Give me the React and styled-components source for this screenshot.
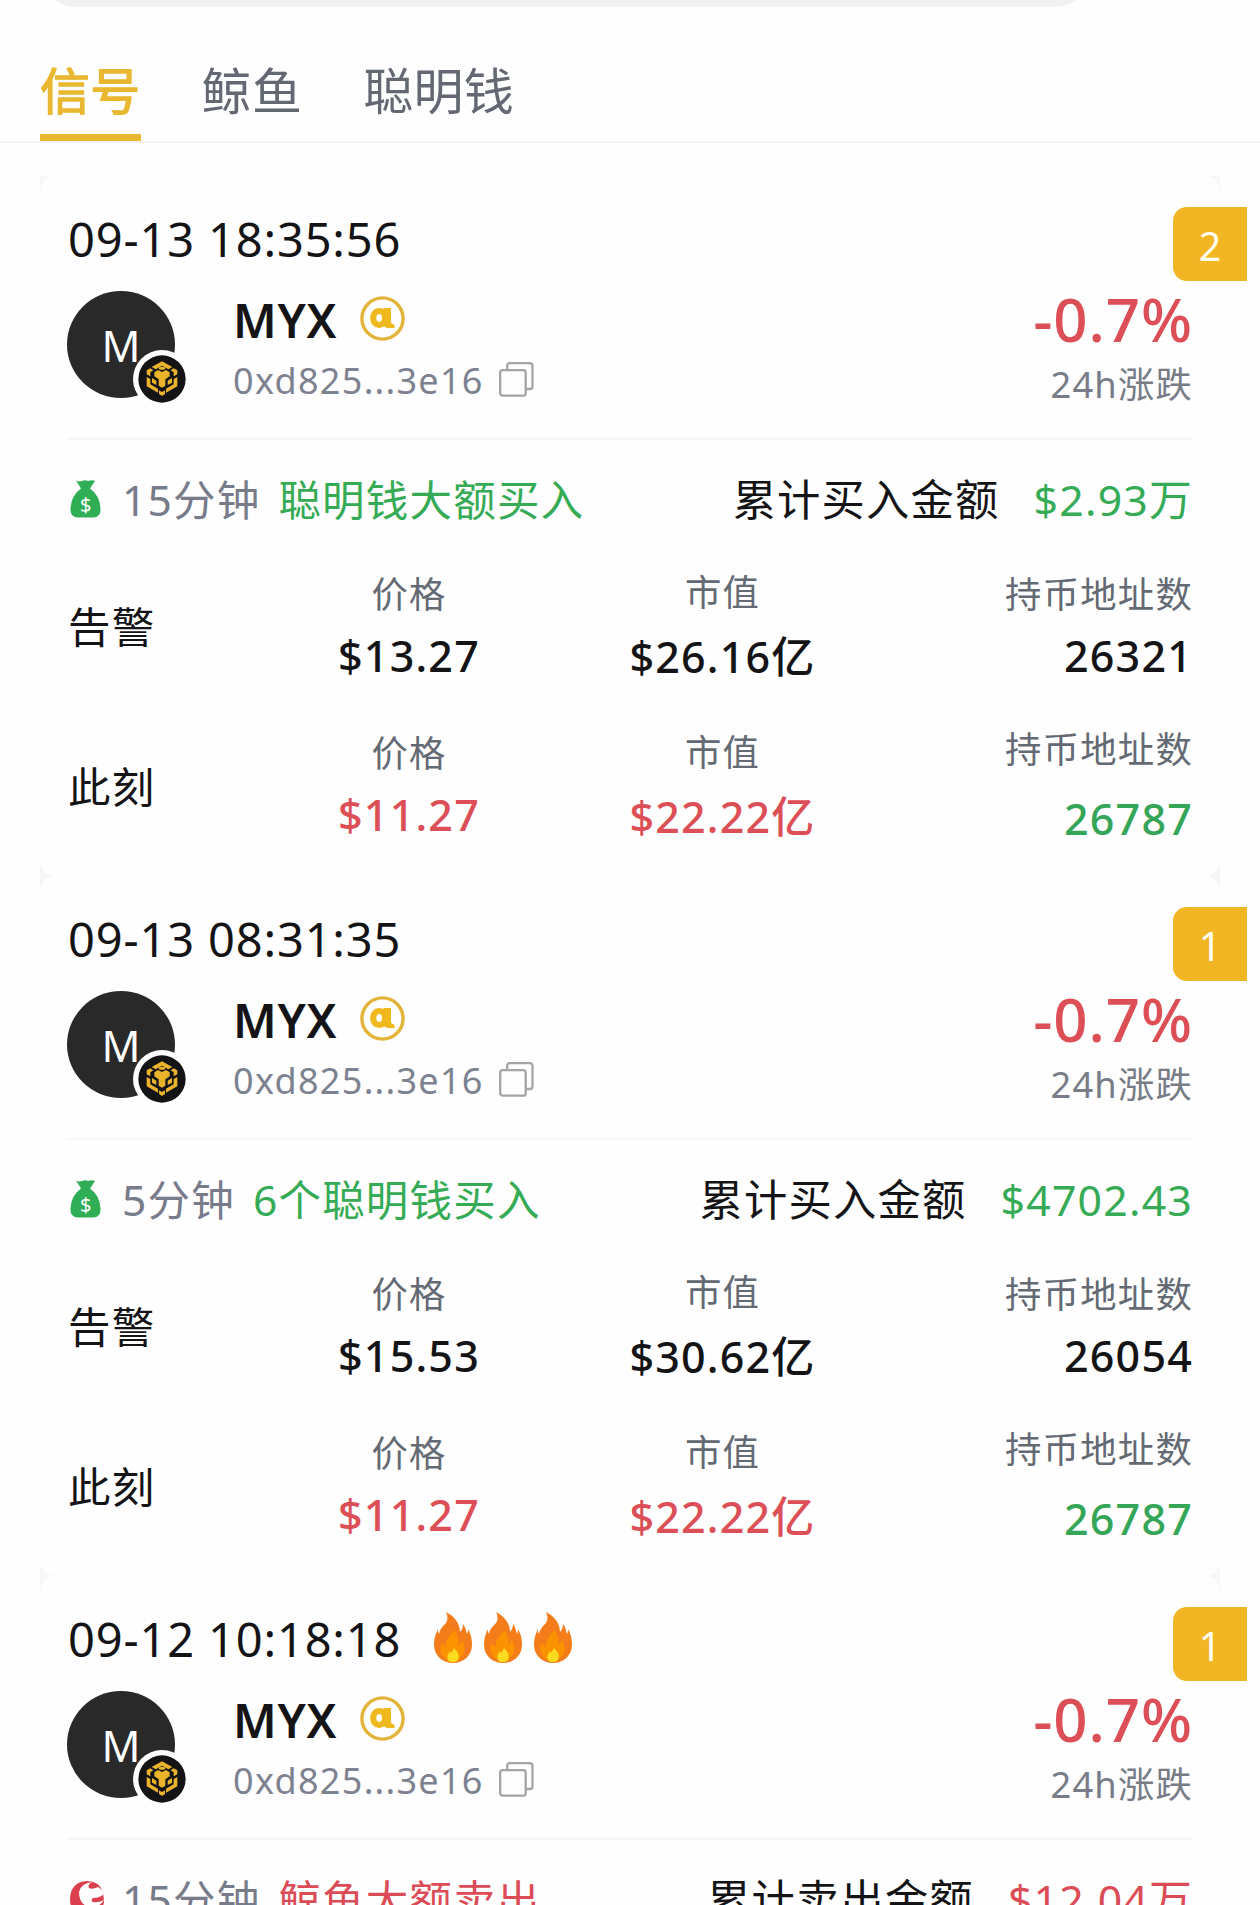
import React from 'react';
import styled, { createGlobalStyle } from 'styled-components';

const GlobalStyle = createGlobalStyle`
    body {
        margin: 0;
        background: #fefefe;
        color: #141416;
        font-family: "Noto Sans", "Noto Sans CJK SC", sans-serif;
        letter-spacing: 1.2px;
    }
`;

const Page = styled.div`
    width: 1260px;
    height: 1905px;
    overflow: hidden;
`;

const SearchClip = styled.div`
    display: flex;
    flex-direction: column;
    justify-content: flex-end;
    height: 7px;
    overflow: hidden;
`;

const SearchBar = styled.div`
    flex: none;
    width: 1045px;
    height: 80px;
    margin-left: 43px;
    border-radius: 32px;
    background: #f1f1f4;
`;

const Tabs = styled.div`
    display: flex;
    gap: 61px;
    height: 134px;
    padding-left: 40px;
    border-bottom: 2px solid #f4f4f5;
`;

const Tab = styled.div`
    box-sizing: border-box;
    padding-top: 54px;
    font-size: 50px;
    line-height: 61px;
    letter-spacing: 0.3px;
    color: ${p => (p.$active ? '#e9b730' : '#636872')};
    border-bottom: ${p => (p.$active ? '7px solid #e9b730' : 'none')};
    -webkit-text-stroke: ${p => (p.$active ? '1.3px #e9b730' : '0')};
`;

const List = styled.div`
    margin: 33px 40px 0;
    background: #f7f7f8;
`;

const Card = styled.div`
    position: relative;
    box-sizing: border-box;
    height: 700px;
    padding: 31px 28px 0;
    border-radius: 15px;
    background: #fefefe;
`;

const Rank = styled.div`
    position: absolute;
    top: 31px;
    right: -27px;
    width: 74px;
    height: 74px;
    border-radius: 14px 0 0 14px;
    background: #f2b624;
    color: #fffdf0;
    font-size: 39.5px;
    line-height: 78px;
    letter-spacing: 0;
    text-align: center;
`;

const DateRow = styled.div`
    display: flex;
    align-items: center;
    height: 60px;
    font-size: 47px;
    letter-spacing: 0.85px;
`;

const DateText = styled.span`
    padding-top: 3px;
    line-height: 60px;
`;

const Fires = styled.div`
    display: flex;
    gap: 12px;
    margin-left: 33px;
`;

const Header = styled.div`
    display: flex;
    align-items: flex-start;
    height: 117px;
    margin-top: 21px;
    padding-bottom: 33px;
    border-bottom: 2px solid #f7f7f8;
`;

const Avatar = styled.div`
    position: relative;
    width: 108px;
    height: 107px;
    margin: 3px 1px 0 -1px;
    border-radius: 50%;
    background: #292929;
    color: #fff;
    font-size: 43px;
    line-height: 109px;
    letter-spacing: 0;
    text-align: center;
`;

const ChainBadge = styled.svg`
    position: absolute;
    left: 66px;
    top: 59px;
    width: 58px;
    height: 58px;
`;

const Info = styled.div`
    flex: 1;
    padding: 7px 0 0 57px;
`;

const Name = styled.div`
    display: flex;
    align-items: center;
    gap: 23px;
    height: 50px;
    font-size: 47px;
    line-height: 50px;
    font-weight: 600;
    letter-spacing: 0.8px;

    svg {
        margin-bottom: 3px;
    }
`;

const Address = styled.div`
    display: flex;
    align-items: center;
    gap: 15px;
    height: 44px;
    margin-top: 14px;
    font-size: 36px;
    line-height: 44px;
    letter-spacing: 1.3px;
    color: #7d8290;

    svg {
        margin-bottom: 4px;
    }
`;

const Change = styled.div`
    text-align: right;
    font-size: 60px;
    line-height: 62px;
    font-weight: 500;
    letter-spacing: 0.9px;
    margin-right: -1px;
    color: #dd4f57;
`;

const ChangeLabel = styled.div`
    margin: 12px -1px 0 0;
    text-align: right;
    font-size: 36.3px;
    line-height: 44px;
    color: #777c86;
`;

const Signal = styled.div`
    display: flex;
    align-items: center;
    height: 60px;
    margin: 29px -1px 0 0;
    font-size: 42.5px;
    line-height: 60px;
    white-space: nowrap;

    span {
        padding-top: 2px;
    }
`;

const SignalIcon = styled.svg`
    flex: none;
    margin-left: 1px;
    width: 35px;
    height: 38px;
`;

const Period = styled.span`
    margin-left: 18px;
    color: #777b8a;
`;

const Action = styled.span`
    margin-left: 18px;
    color: ${p => (p.$sell ? '#dc4c57' : '#35ab55')};
`;

const Total = styled.span`
    margin-left: auto;
    font-size: 43.3px;
`;

const Amount = styled.span`
    margin-left: 34px;
    font-size: 42.8px;
    color: ${p => (p.$sell ? '#dc4c57' : '#35ab55')};
`;

const Stats = styled.div`
    display: grid;
    grid-template-columns: 180px 322px 305px 1fr;
    align-items: center;
    height: 111px;
    margin: ${p => (p.$first ? 41 : 46)}px -1px 0 0;
`;

const StatTitle = styled.div`
    padding-top: 2px;
    font-size: 42.5px;
    line-height: 60px;
`;

const Stat = styled.div`
    display: flex;
    flex-direction: column;
    align-items: ${p => (p.$end ? 'flex-end' : 'center')};
    gap: ${p => p.$gap || 15}px;
`;

const StatLabel = styled.div`
    font-size: 36.4px;
    line-height: 44px;
    color: #646a73;
`;

const StatValue = styled.div`
    font-size: 43px;
    line-height: 50px;
    font-weight: 500;
    color: ${p => p.$color || '#141416'};
`;

const RED = '#dc4f56';
const GREEN = '#35a557';

const cards = [
    {
        date: '09-13 18:35:56',
        rank: 2,
        fires: 0,
        period: '15分钟',
        action: '聪明钱大额买入',
        total: '累计买入金额',
        amount: '$2.93万',
        alert: ['$13.27', '$26.16亿', '26321'],
        now: ['$11.27', '$22.22亿', '26787'],
    },
    {
        date: '09-13 08:31:35',
        rank: 1,
        fires: 0,
        period: '5分钟',
        action: '6个聪明钱买入',
        total: '累计买入金额',
        amount: '$4702.43',
        alert: ['$15.53', '$30.62亿', '26054'],
        now: ['$11.27', '$22.22亿', '26787'],
    },
    {
        date: '09-12 10:18:18',
        rank: 1,
        fires: 3,
        sell: true,
        period: '15分钟',
        action: '鲸鱼大额卖出',
        total: '累计卖出金额',
        amount: '$12.04万',
    },
];

function Fire() {
    return (
        <svg width="38" height="51" viewBox="0 0 38 51">
            <path fill="#f57c1a" d="M12 0c8 4 14 11 14 20 2-2 3-5 3-8 3 4 3 7 4 10 1-2 1-3 1-5 3 5 4 10 4 16 0 10-8 18-19 18S0 43 0 33c0-6 1-10 4-16 0 2 0 4 1 5 1-5 3-7 7-11 2-3 2-7 0-11z" />
            <path fill="#fb9300" d="M20 18c5 6 5 10 4 15 2-1 3-3 4-5 4 7 3 13-1 17-4 5-12 5-16 1-5-4-6-9-3-15 1 2 2 3 4 4-1-7 4-11 8-17z" />
            <path fill="#fddb1f" d="M20 36c4 4 6 8 4 12-3 3-8 3-10 0-2-4 1-7 2-9l1 2c1-1 2-3 3-5z" />
        </svg>
    );
}

function AlphaIcon() {
    return (
        <svg width="45" height="45" viewBox="0 0 45 45">
            <circle cx="22.5" cy="22.5" r="20.6" fill="none" stroke="#e3b43a" strokeWidth="3.4" />
            <ellipse cx="19.200" cy="22" rx="6" ry="7" fill="none" stroke="#efb81c" strokeWidth="6.200" />
            <path d="M23.500 12h7.500v14q.5 2.500 3.500 2.500v3.500h-6q-5 0-5-5z" fill="#efb81c" />
        </svg>
    );
}

function CopyIcon() {
    return (
        <svg width="35" height="35" viewBox="0 0 35 35" fill="none" stroke="#a4a5a8" strokeWidth="2.300">
            <rect x="1.200" y="8.200" width="25.500" height="25.500" rx="2.500" />
            <path d="M8.200 8V3.700q0-2.500 2.500-2.500h20q2.800 0 2.800 2.800v20.500q0 2.500-2.500 2.500h-4" />
        </svg>
    );
}

function ChainIcon() {
    return (
        <ChainBadge viewBox="8 1 174 174">
            <circle cx="95" cy="88" r="87" fill="#fefefe" />
            <circle cx="95" cy="88" r="71" fill="#141416" />
            <g fill="#e9b42c">
                <path d="M64 52l31-17 31 17-12 7-19-11-19 11z" />
                <path d="M49 62l11-6 9 6-9 6v12l-11-6z" />
                <path d="M141 62l-11-6-9 6 9 6v12l11-6z" />
                <path d="M49 82l11 6v16l23 13v12l-34-19z" />
                <path d="M141 82l-11 6v16l-23 13v12l34-19z" />
                <path d="M72 68l11-7 12 6 12-6 11 7v12l-13 9v19l-10 6-10-6V89l-13-9z" />
                <path d="M65 85l13 8v13l-13-7z" />
                <path d="M125 85l-13 8v13l13-7z" />
                <path d="M86 122l9 5 9-5v11l-9 6-9-6z" />
            </g>
            <ellipse cx="95" cy="56" rx="10" ry="4.500" fill="#e9b42c" />
        </ChainBadge>
    );
}

function MoneyBag() {
    return (
        <SignalIcon viewBox="0 0 35 38">
            <path fill="#2fae56" d="M7 .5q3 1.500 6 .500 3-1.500 6 0 4-1.500 7 0l-5 7.500q10 7 10.500 20 .5 9-7.500 9H9q-8 0-7.500-9Q2 15.500 12 8.500z" />
            <text x="16.700" y="31.500" textAnchor="middle" fontSize="20" letterSpacing="0" fill="#fff">$</text>
        </SignalIcon>
    );
}

function WhaleIcon() {
    return (
        <SignalIcon viewBox="0 0 35 38">
            <path fill="#dc3f4e" d="M34 12Q30 1 18 1 1 2 1 20q1 17 17 17 16-1 17-16z" />
            <path fill="#fefefe" d="M10 12Q12 3 24 2q-6 2-4 6 3 2 9-1 5 3 6 7-4 4-11 4-3 3 0 4 5 1 11-2-5 8-14 7-11-2-11-15z" />
        </SignalIcon>
    );
}

function StatRow(props) {
    const { title, values, colors, first } = props;

    return (
        <Stats $first={first}>
            <StatTitle>{title}</StatTitle>
            <Stat>
                <StatLabel>价格</StatLabel>
                <StatValue $color={colors[0]}>{values[0]}</StatValue>
            </Stat>
            <Stat $gap={18}>
                <StatLabel>市值</StatLabel>
                <StatValue $color={colors[1]}>{values[1]}</StatValue>
            </Stat>
            <Stat $end $gap={first ? 15 : 23}>
                <StatLabel>持币地址数</StatLabel>
                <StatValue $color={colors[2]}>{values[2]}</StatValue>
            </Stat>
        </Stats>
    );
}

function SignalCard(props) {
    const { date, rank, fires, sell, period, action, total, amount, alert, now } = props;

    return (
        <Card>
            <Rank>{rank}</Rank>
            <DateRow>
                <DateText>{date}</DateText>
                {fires > 0 && (
                    <Fires>
                        {Array.from({ length: fires }, (_, i) => <Fire key={i} />)}
                    </Fires>
                )}
            </DateRow>
            <Header>
                <Avatar>
                    M
                    <ChainIcon />
                </Avatar>
                <Info>
                    <Name>MYX <AlphaIcon /></Name>
                    <Address>0xd825...3e16 <CopyIcon /></Address>
                </Info>
                <div>
                    <Change>-0.7%</Change>
                    <ChangeLabel>24h涨跌</ChangeLabel>
                </div>
            </Header>
            <Signal>
                {sell ? <WhaleIcon /> : <MoneyBag />}
                <Period>{period}</Period>
                <Action $sell={sell}>{action}</Action>
                <Total>{total}</Total>
                <Amount $sell={sell}>{amount}</Amount>
            </Signal>
            {alert && <StatRow title="告警" first values={alert} colors={[]} />}
            {now && <StatRow title="此刻" values={now} colors={[RED, RED, GREEN]} />}
        </Card>
    );
}

export default function App() {
    return (
        <Page>
            <GlobalStyle />
            <SearchClip>
                <SearchBar />
            </SearchClip>
            <Tabs>
                <Tab $active>信号</Tab>
                <Tab>鲸鱼</Tab>
                <Tab>聪明钱</Tab>
            </Tabs>
            <List>
                {cards.map(card => <SignalCard key={card.date} {...card} />)}
            </List>
        </Page>
    );
}
